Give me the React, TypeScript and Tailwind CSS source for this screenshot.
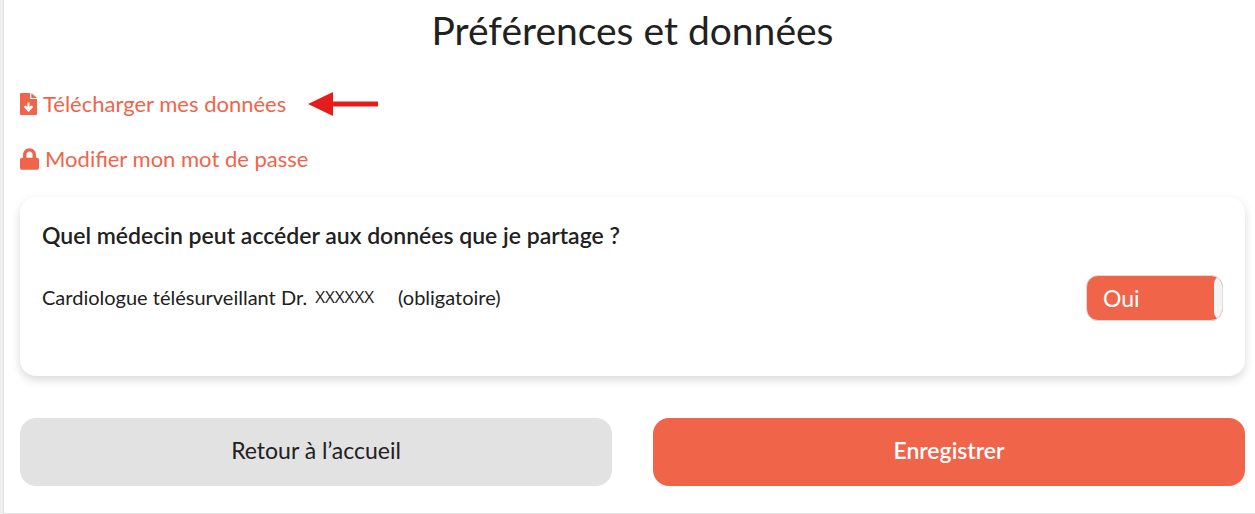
import React, { useState } from 'react'
import { FaLock } from 'react-icons/fa'

const FileDownloadIcon: React.FC = () => (
  <svg className="h-[22px] w-[17px] shrink-0" viewBox="0 0 17 22" fill="currentColor" aria-hidden="true">
    <path
      fillRule="evenodd"
      d="M1 0H10V5Q10 6 11 6H17V21Q17 22 16 22H1Q0 22 0 21V1Q0 0 1 0ZM7.5 9.5V13.8L5.2 12.4L3.8 14L8.5 19L13.2 14L11.8 12.4L9.5 13.8V9.5Z"
    />
    <path d="M11.3 0L17 5H11.3Z" />
  </svg>
)

const ArrowPointer: React.FC = () => (
  <svg className="h-6 w-[70px] shrink-0" viewBox="0 0 70 24" aria-hidden="true">
    <path d="M0 12 L25 0 V9.5 H70 V14.5 H25 V24 Z" fill="#e61c1c" />
  </svg>
)

export default function App() {
  const [shared, setShared] = useState(true)

  return (
    <div className="bg-[#f0f0f0] pl-[3px] font-['Lato','Open_Sans',sans-serif] text-[#212121]">
      <main className="border-b border-l border-[#e2e2e2] bg-white px-4 pt-[3px] pr-[10px] pb-[27px]">
        <h1 className="text-center text-[39px] leading-[54px]">Préférences et données</h1>

        {/* Account links */}
        <nav className="mt-[30px] flex flex-col items-start gap-[22px] text-[22px] leading-[33px] text-[#f0654a]">
          <div className="flex items-center gap-[22px]">
            <a href="#donnees" className="flex items-center gap-1.5">
              <FileDownloadIcon /> Télécharger mes données
            </a>
            <ArrowPointer />
          </div>
          <a href="#mot-de-passe" className="flex items-center gap-1.5">
            <FaLock className="h-[22px] w-[19px]" /> Modifier mon mot de passe
          </a>
        </nav>

        {/* Sharing preferences */}
        <section className="mt-[22px] rounded-2xl bg-white px-[22px] pt-[22px] pb-[55px] shadow-[0_4px_10px_rgba(0,0,0,0.15)]">
          <h2 className="text-[23px] leading-8 font-semibold">Quel médecin peut accéder aux données que je partage ?</h2>
          <div className="mt-6 flex items-center justify-between">
            <p className="flex items-center pb-0.5 text-[20px] leading-7">
              <span>Cardiologue télésurveillant Dr.</span>
              <span className="ml-2 font-['Open_Sans',sans-serif] text-[17px]">XXXXXX</span>
              <span className="ml-6">(obligatoire)</span>
            </p>
            <button
              type="button"
              role="switch"
              aria-checked={shared}
              aria-label="Partager mes données avec le cardiologue"
              onClick={() => setShared(!shared)}
              className="flex h-[46px] w-[137px] overflow-hidden rounded-xl border border-[#dcdcdc] bg-[#f0654a] text-[23px]"
            >
              <span className="flex h-full flex-1 items-center pl-4 text-white">
                {shared ? 'Oui' : 'Non'}
              </span>
              <span className="h-full w-2 rounded-l-xl bg-[#f4f4f4]"></span>
            </button>
          </div>
        </section>

        {/* Actions */}
        <div className="mt-[42px] grid grid-cols-2 gap-[41px] text-[23px] leading-8">
          <button type="button" className="h-[68px] rounded-2xl bg-[#e2e2e2] pb-1">Retour à l’accueil</button>
          <button type="button" className="h-[68px] rounded-2xl bg-[#f0654a] pb-1 font-semibold text-white">Enregistrer</button>
        </div>
      </main>
    </div>
  )
}
